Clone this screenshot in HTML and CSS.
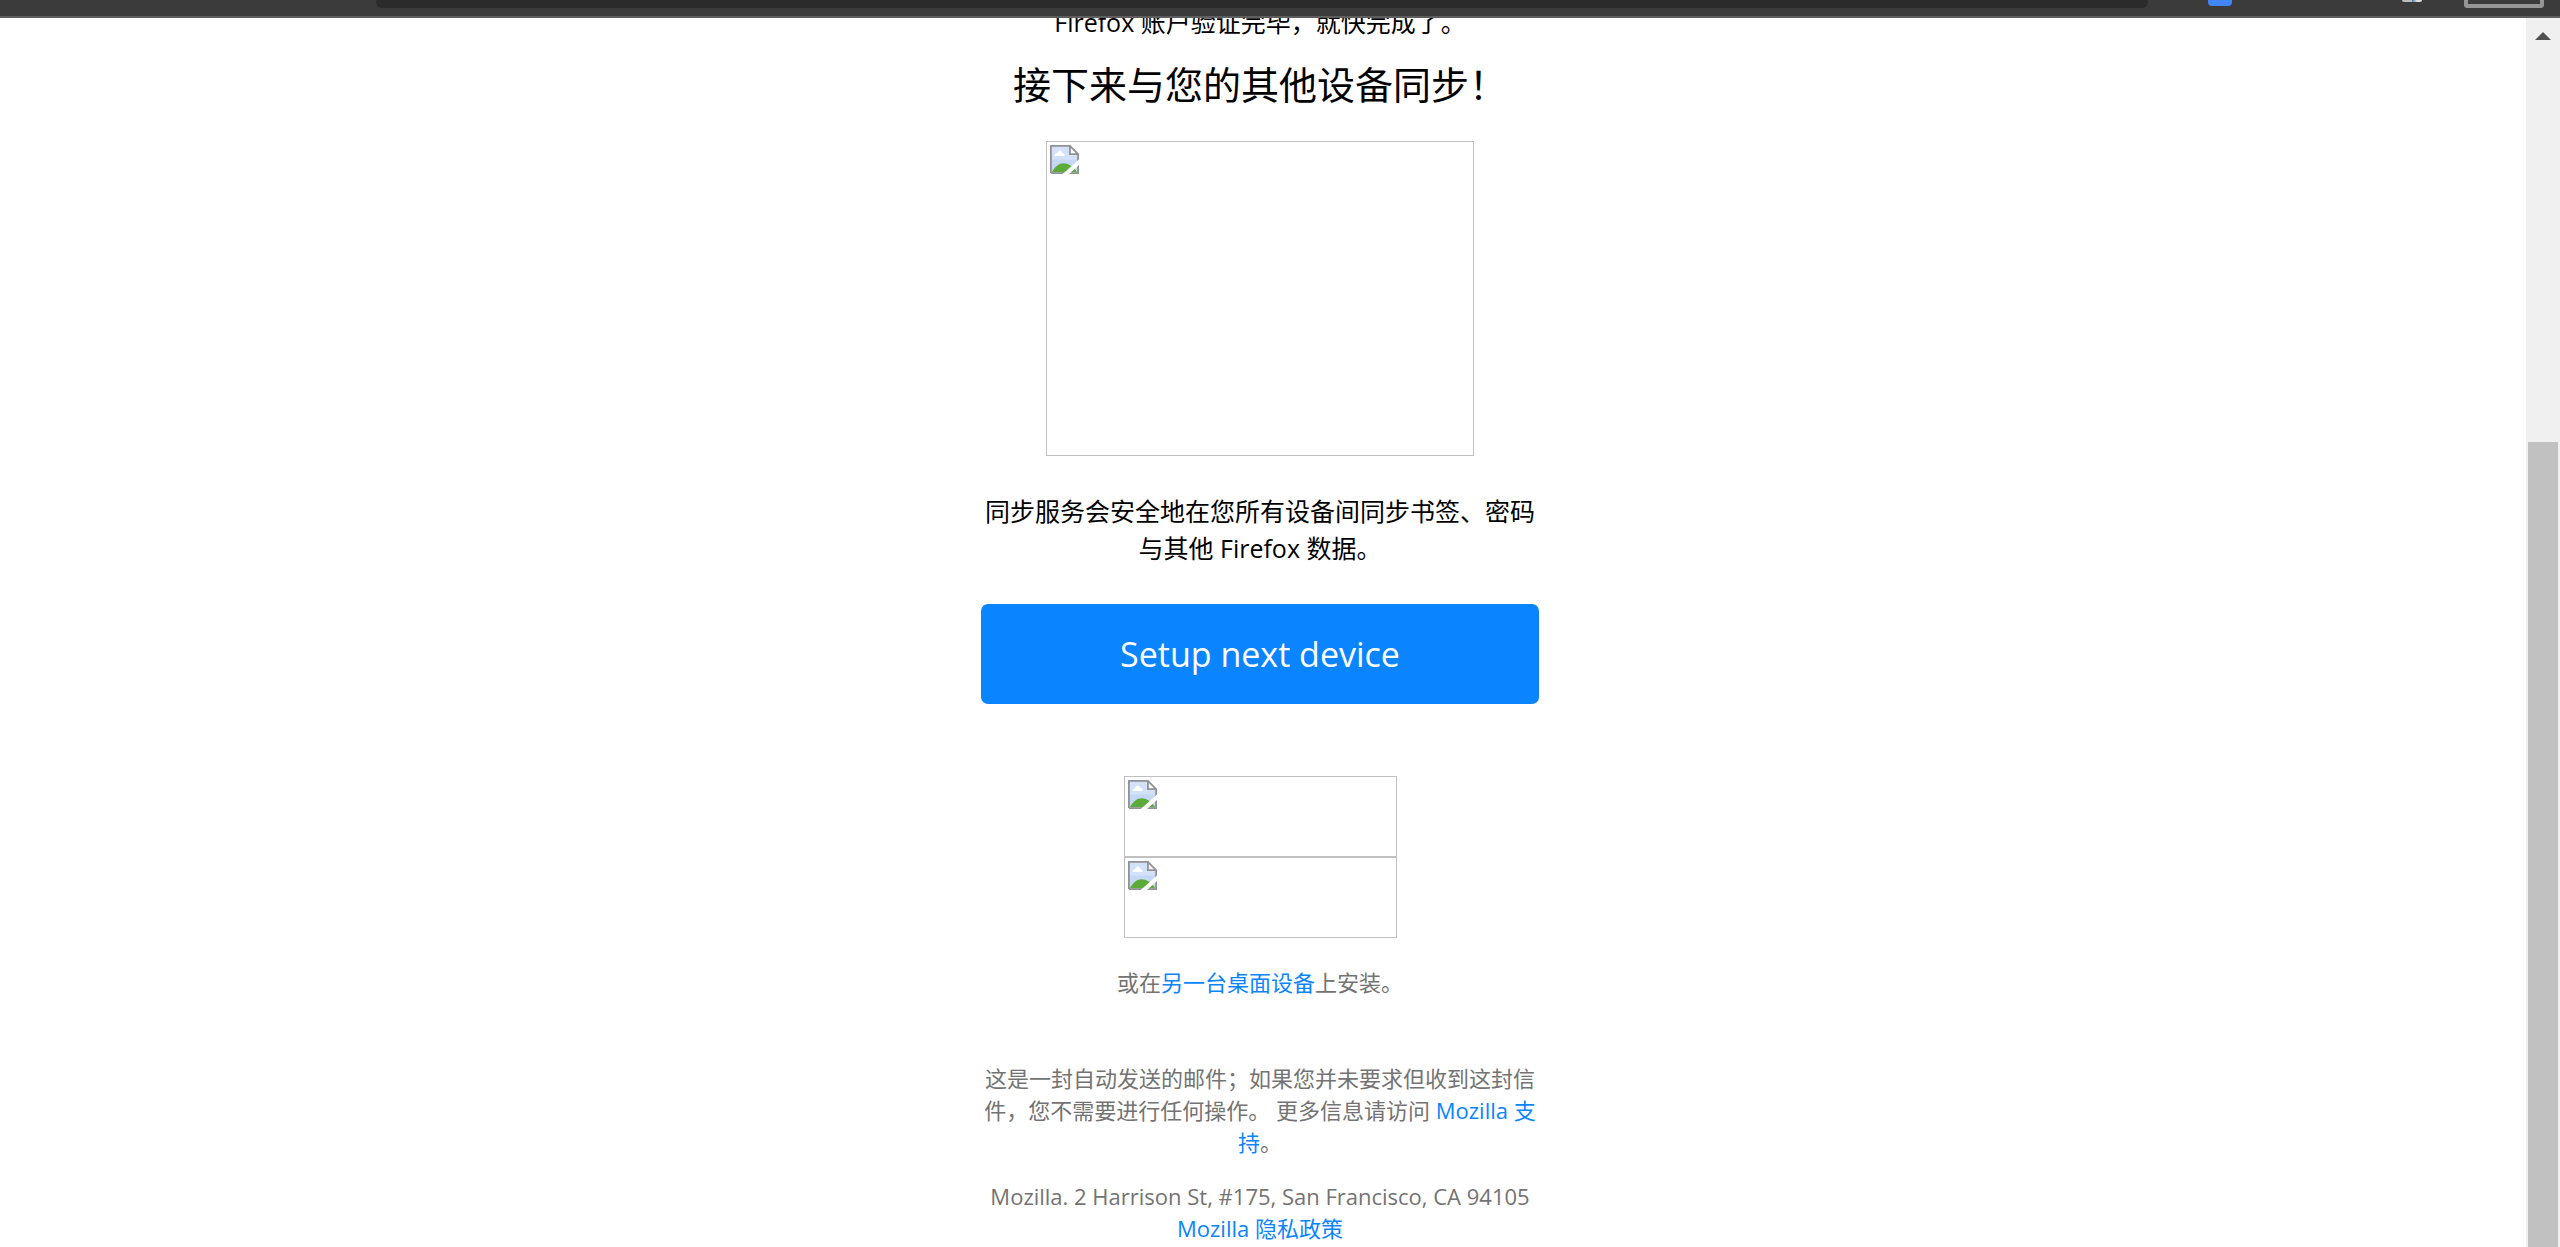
FILE: index.html
```html
<!DOCTYPE html>
<html lang="zh-CN">
<head>
  <meta charset="UTF-8">
  <meta name="viewport" content="width=device-width, initial-scale=1.0">
  <title>Firefox</title>
  <link rel="stylesheet" href="styles.css">
</head>
<body>
  <!-- Shared icon for images that did not load -->
  <svg class="sprite" aria-hidden="true">
    <symbol id="broken" viewBox="0 0 16 16">
      <path d="M0.5 0.5H11L15.5 5V15.5H0.5Z" fill="#c4d8f6"/>
      <path d="M1 1H10.5V5.5H15V8H1Z" fill="#d3e2fa"/>
      <path d="M2.5 6C2.5 4.8 3.6 4.6 4 4.6C4.3 2.6 6.5 2.6 6.8 4.4C7.8 4.4 8.2 5.2 8 6Z" fill="#fff"/>
      <path d="M1 15C3 11.5 5 10 7.5 10C10.5 10 13 12 15 15Z" fill="#5bab38"/>
      <path d="M11 0.5V5H15.5Z" fill="#fff"/>
      <path d="M0.5 15.5V0.5H11L15.5 5V15.5H0.5M11 0.5V5H15.5" fill="none" stroke="#929292"/>
      <path d="M7 16L16 8V11L10.5 16Z" fill="#fff"/>
    </symbol>
  </svg>

  <header class="toolbar">
    <div class="address-bar"></div>
    <div class="extension"></div>
    <div class="avatar"></div>
    <div class="menu-box"></div>
  </header>

  <div class="viewport">
    <main class="page">
      <div class="mail">
        <p class="text">Firefox 账户验证完毕，就快完成了。</p>
        <h1>接下来与您的其他设备同步！</h1>
        <div class="missing hero"><svg class="icon"><use href="#broken"/></svg></div>
        <p class="text intro">同步服务会安全地在您所有设备间同步书签、密码<br>与其他 Firefox 数据。</p>
        <button type="button" class="setup">Setup next device</button>
        <div class="badges">
          <a href="#" class="missing badge" aria-label="App Store"><svg class="icon"><use href="#broken"/></svg></a>
          <a href="#" class="missing badge" aria-label="Google Play"><svg class="icon"><use href="#broken"/></svg></a>
        </div>
        <p class="small">或在<a href="#">另一台桌面设备</a>上安装。</p>
        <footer class="small">
          <p>这是一封自动发送的邮件；如果您并未要求但收到这封信<br>件，您不需要进行任何操作。 更多信息请访问 <a href="#">Mozilla 支<br>持</a>。</p>
          <p class="address">Mozilla. 2 Harrison St, #175, San Francisco, CA 94105<br><a href="#">Mozilla 隐私政策</a></p>
        </footer>
      </div>
    </main>
    <div class="scrollbar">
      <svg class="arrow" viewBox="0 0 16 8"><path d="M8 0L16 8H0Z" fill="#505050"/></svg>
      <div class="thumb"></div>
    </div>
  </div>
</body>
</html>
```

FILE: styles.css
```css
* {
  margin: 0;
  padding: 0;
  box-sizing: border-box;
}

body {
  display: flex;
  flex-direction: column;
  height: 100vh;
  overflow: hidden;
  background: #fff;
  color: #000;
  font-family: "Open Sans", "Noto Sans CJK SC", sans-serif;
}

a {
  color: #0a84ff;
  text-decoration: none;
}

.sprite {
  position: absolute;
  width: 0;
  height: 0;
}

/* Browser toolbar */
.toolbar {
  display: flex;
  flex: none;
  align-items: flex-start;
  height: 18px;
  padding: 0 16px 0 376px;
  background: #3b3b3b;
  border-bottom: 2px solid #5e5e5e;
}

.address-bar {
  flex: 1;
  height: 8px;
  margin-right: 60px;
  background: #2b2b2b;
  border-radius: 0 0 6px 6px;
}

.extension {
  width: 24px;
  height: 6px;
  margin-right: 170px;
  background: #4285f4;
  border-radius: 0 0 4px 4px;
}

.avatar {
  width: 20px;
  height: 2px;
  margin-right: 42px;
  background: linear-gradient(90deg, #bbb 50%, #3a78a8 50%, #ddd 75%);
  border-radius: 0 0 10px 10px;
}

.menu-box {
  width: 80px;
  height: 8px;
  border: 4px solid #959595;
  border-top: none;
  border-radius: 0 0 4px 4px;
}

/* Mail content */
.viewport {
  display: flex;
  flex: 1;
  min-height: 0;
}

.page {
  flex: 1;
  padding-right: 6px;
  overflow: hidden;
}

.mail {
  display: flex;
  flex-direction: column;
  align-items: center;
  width: 558px;
  max-width: 100%;
  margin: -14px auto 0; /* scrolled under the toolbar */
  text-align: center;
}

.text {
  font-size: 25px;
  line-height: 37px;
}

h1 {
  margin: 15px 0 29px;
  font-size: 38px;
  font-weight: 400;
  line-height: 56px;
}

.missing {
  display: block;
  padding: 3px;
  border: 1px solid #c0c0c0;
  text-align: left;
}

.icon {
  display: block;
  width: 29px;
  height: 29px;
}

.hero {
  width: 428px;
  height: 315px;
}

.intro {
  margin: 37px 0;
}

.setup {
  width: 100%;
  height: 100px;
  background: #0a84ff;
  border: none;
  border-radius: 7px;
  color: #fff;
  font-family: inherit;
  font-size: 34px;
  cursor: pointer;
}

.badges {
  margin: 72px 0 28px;
}

.badge {
  width: 273px;
  height: 81px;
}

.small {
  color: #737373;
  font-size: 22px;
  line-height: 32px;
}

footer {
  margin-top: 64px;
  white-space: nowrap;
}

.address {
  margin-top: 22px;
}

/* Scrollbar */
.scrollbar {
  display: flex;
  flex-direction: column;
  width: 34px;
  padding: 14px 2px 0;
  background: #f0f0f0;
}

.arrow {
  align-self: center;
  width: 16px;
  height: 8px;
  margin-bottom: 402px;
}

.thumb {
  flex: 1;
  background: #c1c1c1;
}
```
